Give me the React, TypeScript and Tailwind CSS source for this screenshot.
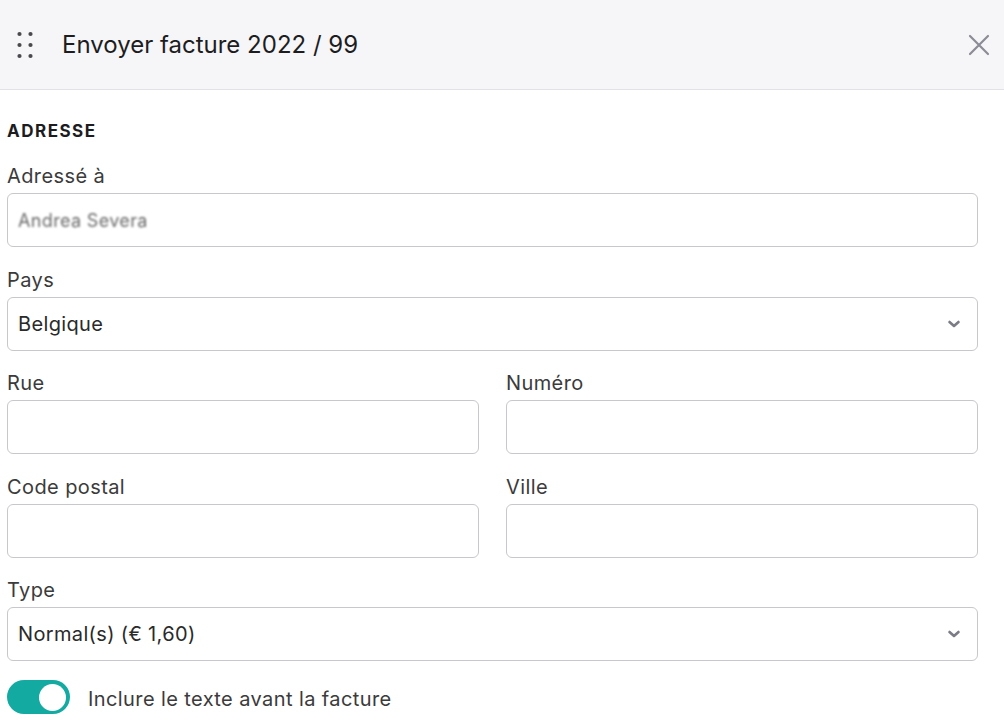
import React from "react";

const font = { fontFamily: "Inter, 'Noto Sans', sans-serif" };

function Label({ children }: { children: React.ReactNode }) {
  return <div className="text-[20px] leading-[24px] tracking-[0.4px] text-[#3b3b3b] mb-[5px]">{children}</div>;
}

function Input({ children }: { children?: React.ReactNode }) {
  return (
    <div className="h-[54px] w-full rounded-[6px] border border-[#c8c8cc] bg-white flex items-center px-[10px] text-[20px] tracking-[0.35px] text-[#2a2a2a]">
      {children}
    </div>
  );
}

function Chevron() {
  return (
    <svg width="14" height="10" viewBox="0 0 14 10" className="shrink-0">
      <path d="M2.5 3 L7 7 L11.5 3" fill="none" stroke="#7c7c86" strokeWidth="2.6" strokeLinecap="round" strokeLinejoin="round" />
    </svg>
  );
}

function Select({ value }: { value: string }) {
  return (
    <div className="h-[54px] w-full rounded-[6px] border border-[#c8c8cc] bg-white flex items-center justify-between pl-[10px] pr-[16px] text-[20px] tracking-[0.35px] text-[#2a2a2a]">
      <span>{value}</span>
      <Chevron />
    </div>
  );
}

export default function App() {
  return (
    <div className="w-[1004px] h-[725px] bg-white overflow-hidden" style={font}>
      <div className="h-[90px] bg-[#f6f6f8] border-b border-[#e2e2e6] flex items-center pl-[17px] pr-[14px]">
        <svg width="16" height="28" viewBox="0 0 16 28" className="shrink-0">
          {[3, 14, 25].map((y) =>
            [2.5, 13.5].map((x) => <circle key={`${x}-${y}`} cx={x} cy={y} r="2.1" fill="#4a4a4e" />)
          )}
        </svg>
        <div className="ml-[29px] text-[24px] text-[#1d1d1f]">Envoyer facture 2022 / 99</div>
        <div className="ml-auto">
          <svg width="22" height="22" viewBox="0 0 22 22">
            <path d="M2 2 L20 20 M20 2 L2 20" stroke="#8c8c96" strokeWidth="2.2" strokeLinecap="round" />
          </svg>
        </div>
      </div>

      <div className="pl-[7px] pr-[26px] pt-[31px]">
        <div className="text-[17px] leading-[20px] font-bold tracking-[1.5px] text-[#1d1d1f]">ADRESSE</div>

        <div className="mt-[23px]">
          <Label>Adressé à</Label>
          <Input>
            <span className="blur-[1.2px] text-[#6a6a6a] text-[18px]">Andrea Severa</span>
          </Input>
        </div>

        <div className="mt-[21px]">
          <Label>Pays</Label>
          <Select value="Belgique" />
        </div>

        <div className="mt-[20px] grid grid-cols-2 gap-x-[27px] gap-y-[21px]">
          <div>
            <Label>Rue</Label>
            <Input />
          </div>
          <div>
            <Label>Numéro</Label>
            <Input />
          </div>
          <div>
            <Label>Code postal</Label>
            <Input />
          </div>
          <div>
            <Label>Ville</Label>
            <Input />
          </div>
        </div>

        <div className="mt-[20px]">
          <Label>Type</Label>
          <Select value="Normal(s) (€ 1,60)" />
        </div>

        <div className="mt-[19px] flex items-center">
          <div className="w-[63px] h-[34px] rounded-full bg-[#13aaa2] flex items-center justify-end pr-[4px] shrink-0">
            <div className="w-[27px] h-[27px] rounded-full bg-white" />
          </div>
          <div className="ml-[18px] pt-[3px] text-[20px] tracking-[0.4px] text-[#3b3b3b]">Inclure le texte avant la facture</div>
        </div>
      </div>
    </div>
  );
}
